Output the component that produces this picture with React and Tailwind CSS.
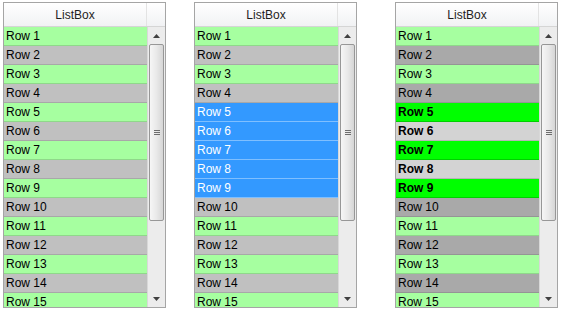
import React from 'react';

const ROWS = Array.from({ length: 15 }, (_, i) => i + 1);

const rowStyle = (variant, n) => {
  if (variant === 'select') {
    if (n >= 5 && n <= 9) return 'bg-[#3399ff] text-white border-[#7fbfff]';
    return n % 2 ? 'bg-[#a6ffa0] text-black border-[#8fd88a]' : 'bg-[#c0c0c0] text-black border-[#a8a8a8]';
  }
  if (variant === 'custom') {
    if (n >= 5 && n <= 9) {
      return n % 2
        ? 'bg-[#00ff00] text-black font-bold border-[#00d000]'
        : 'bg-[#d3d3d3] text-black font-bold border-[#b5b5b5]';
    }
    return n % 2 ? 'bg-[#a6ffa0] text-black border-[#8fd88a]' : 'bg-[#a9a9a9] text-black border-[#959595]';
  }
  return n % 2 ? 'bg-[#a6ffa0] text-black border-[#8fd88a]' : 'bg-[#c0c0c0] text-black border-[#a8a8a8]';
};

const ScrollBar = () => (
  <div className="w-[18px] flex flex-col bg-[#ececec] border-l border-[#d8d8d8]">
    <div className="h-[17px] flex items-center justify-center">
      <svg width="7" height="4" viewBox="0 0 7 4"><path d="M3.5 0 L7 4 L0 4 Z" fill="#404040" /></svg>
    </div>
    <div className="h-[177px] mx-[1px] rounded-[2px] border border-[#979797] bg-gradient-to-r from-[#f6f6f6] via-[#e9e9e9] to-[#d6d6d6] flex flex-col items-center justify-center gap-[1px]">
      <div className="w-[6px] h-px bg-[#6d6d6d]" />
      <div className="w-[6px] h-px bg-[#6d6d6d]" />
      <div className="w-[6px] h-px bg-[#6d6d6d]" />
    </div>
    <div className="flex-1" />
    <div className="h-[17px] flex items-center justify-center">
      <svg width="7" height="4" viewBox="0 0 7 4"><path d="M0 0 L7 0 L3.5 4 Z" fill="#404040" /></svg>
    </div>
  </div>
);

const ListBox = ({ variant, className }) => (
  <div className={`w-[163px] h-[306px] border border-[#a5a5a5] bg-white flex flex-col ${className}`}>
    <div className="h-[24px] flex border-b border-[#d5d5d5] bg-gradient-to-b from-white to-[#f1f2f4]">
      <div className="flex-1 flex items-center justify-center text-[12px] text-[#1e1e1e] border-r border-[#e3e3e3]">ListBox</div>
      <div className="w-[18px]" />
    </div>
    <div className="flex-1 flex overflow-hidden">
      <div className="flex-1 overflow-hidden">
        {ROWS.map((n) => (
          <div key={n} className={`h-[19px] border-b pl-[2px] flex items-center text-[12px] leading-none ${rowStyle(variant, n)}`}>
            Row {n}
          </div>
        ))}
      </div>
      <ScrollBar />
    </div>
  </div>
);

export default function App() {
  return (
    <div className="w-[562px] h-[312px] bg-white overflow-hidden flex items-start pt-[2px] pl-[3px]" style={{ fontFamily: '"Liberation Sans", Arial, sans-serif' }}>
      <ListBox variant="plain" />
      <ListBox variant="select" className="ml-[28px]" />
      <ListBox variant="custom" className="ml-[38px]" />
    </div>
  );
}
